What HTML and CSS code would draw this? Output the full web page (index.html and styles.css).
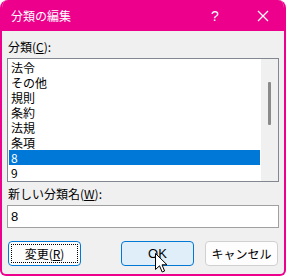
FILE: index.html
```html
<!DOCTYPE html>
<html lang="ja">
<head>
  <meta charset="UTF-8">
  <title>分類の編集</title>
  <link rel="stylesheet" href="styles.css">
</head>
<body>
  <div class="window">
    <!-- タイトルバー -->
    <div class="titlebar">
      <span class="title">分類の編集</span>
      <span class="help">?</span>
      <svg class="close" width="12" height="12" viewBox="0 0 12 12">
        <path d="M1 1 L11 11 M11 1 L1 11" stroke="#fff" stroke-width="1.2" fill="none"/>
      </svg>
    </div>

    <div class="content">
      <div class="label label-top">分類(<u>C</u>):</div>
      <div class="listbox">
        <ul class="items">
          <li>法令</li>
          <li>その他</li>
          <li>規則</li>
          <li>条約</li>
          <li>法規</li>
          <li>条項</li>
          <li class="selected">8</li>
          <li>9</li>
        </ul>
        <div class="scrollbar"><div class="thumb"></div></div>
      </div>

      <div class="label label-name">新しい分類名(<u>W</u>):</div>
      <div class="textbox">8</div>

      <!-- ボタン -->
      <div class="buttons">
        <button class="btn btn-focus"><span class="focus-rect">変更(<u>R</u>)</span></button>
        <div class="right-buttons">
          <button class="btn btn-hover">OK</button>
          <button class="btn">キャンセル</button>
        </div>
      </div>
    </div>

    <svg class="cursor" width="13" height="20" viewBox="0 0 13 20">
      <path d="M0.5 0.5 L0.5 16.5 L4.5 12.8 L7.2 19 L9.6 18 L7 11.8 L12 11.8 Z" fill="#fff" stroke="#000" stroke-width="1"/>
    </svg>
  </div>
</body>
</html>
```

FILE: styles.css
```css
body {
  margin: 0;
  background-color: #ffffff;
  font-family: 'Noto Sans CJK JP', 'Noto Sans', sans-serif;
  font-size: 12px;
  color: #000000;
}
.window {
  position: relative;
  width: 286px;
  height: 276px;
  box-sizing: border-box;
  background-color: #f0f0f0;
  border: 2px solid #ec008c; /* magenta frame */
  border-top: none;
  border-radius: 8px 8px 6px 6px;
  overflow: hidden;
}
.titlebar {
  display: flex;
  align-items: center;
  height: 31px;
  margin: 0 -2px;
  padding-left: 11px;
  background-color: #ec008c;
  color: #ffffff;
}
.title {
  flex: 1;
  font-size: 12px;
}
.help {
  width: 12px;
  margin-right: 34px;
  font-family: 'Liberation Sans', sans-serif;
  font-size: 14px;
}
.close {
  margin-right: 17px;
}
.content {
  padding: 0 5px;
}
.label {
  line-height: 16px;
  padding-left: 1px;
}
.label-top {
  margin-top: 8px;
  margin-bottom: 3px;
}
.label-name {
  margin-top: 4px;
  margin-bottom: 3px;
}
.listbox {
  display: flex;
  height: 124px;
  box-sizing: border-box;
  border: 1px solid #828790;
  background-color: #ffffff;
}
.items {
  flex: 1;
  list-style: none;
  margin: 0;
  padding: 1px 1px 0 1px;
}
.items li {
  height: 15px;
  line-height: 15px;
  padding-left: 2px;
}
.items li.selected {
  background-color: #0078d7;
  color: #ffffff;
}
.scrollbar {
  position: relative;
  width: 17px;
  background-color: #f0f0f0;
}
.thumb {
  position: absolute;
  left: 7px;
  top: 23px;
  width: 3px;
  height: 43px;
  border-radius: 1px;
  background-color: #8a8a8a;
}
.textbox {
  height: 23px;
  box-sizing: border-box;
  border: 1px solid #a0a0a0;
  background-color: #ffffff;
  padding-left: 3px;
  line-height: 21px;
  font-family: 'Liberation Sans', sans-serif;
  font-size: 13px;
}
.buttons {
  display: flex;
  justify-content: space-between;
  margin-top: 13px;
  padding: 0 1px;
}
.right-buttons {
  display: flex;
  gap: 11px;
}
.btn {
  width: 73px;
  height: 25px;
  padding: 0;
  border: 1px solid #d0d0d0;
  border-radius: 4px;
  background-color: #fdfdfd;
  font-family: 'Noto Sans CJK JP', 'Noto Sans', sans-serif;
  font-size: 12px;
  color: #000000;
}
.btn-focus {
  display: flex;
  padding: 2px;
  border-color: #0078d4;
}
.focus-rect {
  flex: 1;
  border: 1px dotted #000000;
  line-height: 17px;
}
.btn-hover {
  border-color: #0078d4;
  background-color: #e0eef9;
  font-family: 'Liberation Sans', sans-serif;
  font-size: 13px;
}
.cursor {
  position: absolute;
  left: 153px;
  top: 253px;
}
```
